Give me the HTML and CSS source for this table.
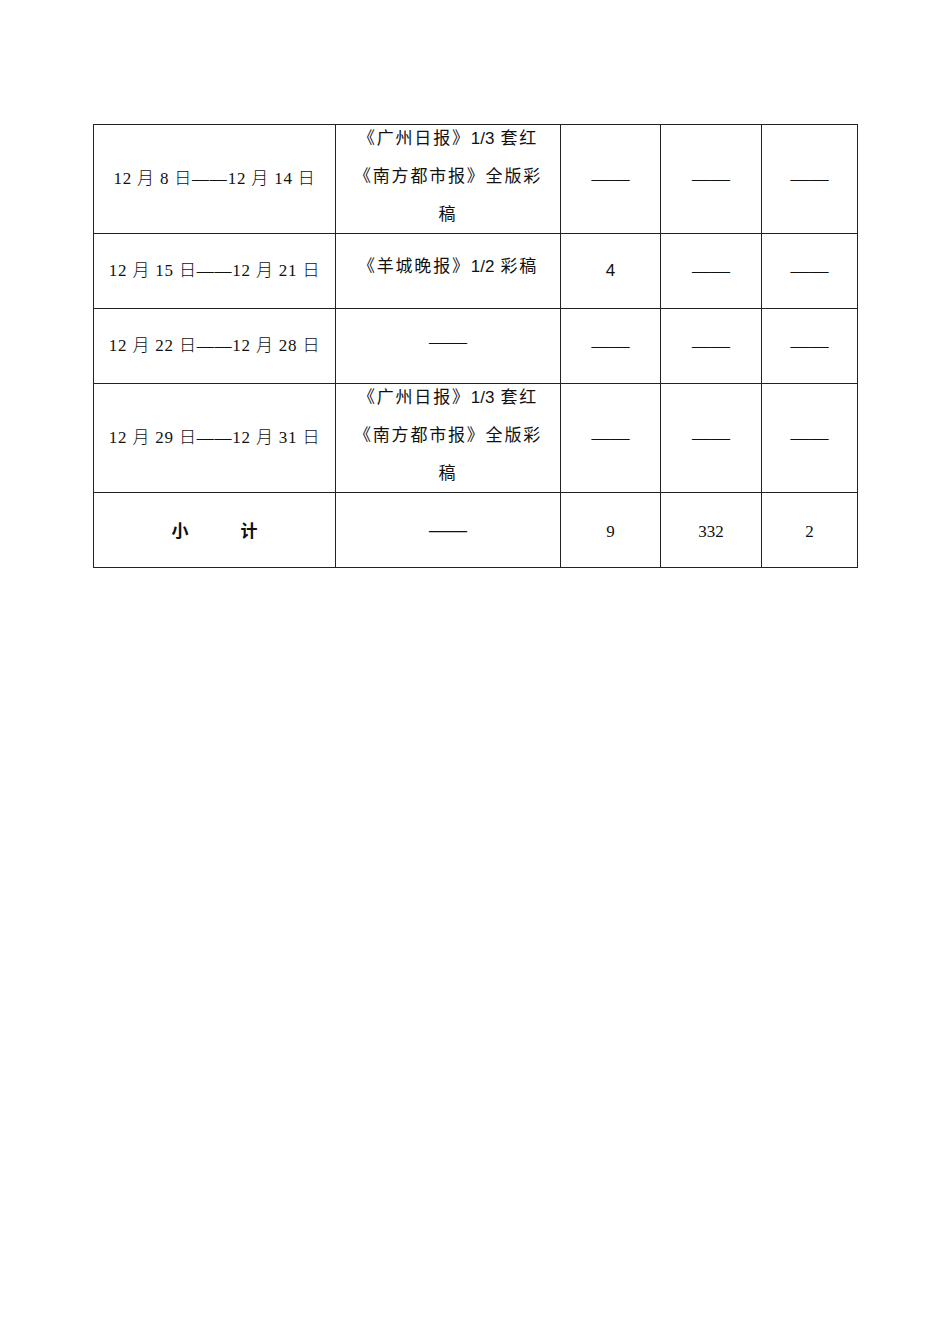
FILE: index.html
```html
<!DOCTYPE html>
<html lang="zh">
<head>
<meta charset="utf-8">
<link rel="stylesheet" href="styles.css">
</head>
<body>
<div class="page">
<table class="sheet">
  <colgroup>
    <col class="c1"><col class="c2"><col class="c3"><col class="c4"><col class="c5">
  </colgroup>
  <tr class="tall">
    <td class="date">12 月 8 日——12 月 14 日</td>
    <td class="media"><div class="lines">《广州日报》<span class="sans">1/3</span> 套红<br>《南方都市报》全版彩<br>稿</div></td>
    <td class="dash">——</td><td class="dash">——</td><td class="dash">——</td>
  </tr>
  <tr class="short">
    <td class="date">12 月 15 日——12 月 21 日</td>
    <td class="media"><div class="up">《羊城晚报》<span class="sans">1/2</span> 彩稿</div></td>
    <td class="num sans">4</td><td class="dash">——</td><td class="dash">——</td>
  </tr>
  <tr class="short">
    <td class="date">12 月 22 日——12 月 28 日</td>
    <td class="dash"><div class="up">——</div></td>
    <td class="dash">——</td><td class="dash">——</td><td class="dash">——</td>
  </tr>
  <tr class="tall">
    <td class="date">12 月 29 日——12 月 31 日</td>
    <td class="media"><div class="lines">《广州日报》<span class="sans">1/3</span> 套红<br>《南方都市报》全版彩<br>稿</div></td>
    <td class="dash">——</td><td class="dash">——</td><td class="dash">——</td>
  </tr>
  <tr class="short">
    <td class="total">小<span class="gap"></span>计</td>
    <td class="dash bold">——</td>
    <td class="num"><div class="down">9</div></td><td class="num"><div class="down">332</div></td><td class="num"><div class="down">2</div></td>
  </tr>
</table>
</div>
</body>
</html>
```
FILE: styles.css
```css
html, body {
  margin: 0;
  padding: 0;
  background: #fff;
}
.page {
  padding: 124px 0 0 93px;
}
.sheet {
  border-collapse: collapse;
  table-layout: fixed;
  width: 764px;
  font-family: "Liberation Serif", "Noto Sans CJK SC", serif;
  font-size: 16px;
  color: #111;
}
.c1 { width: 242px; }
.c2 { width: 225px; }
.c3 { width: 100px; }
.c4 { width: 101px; }
.c5 { width: 96px; }
.sheet td {
  border: 1px solid #222;
  text-align: center;
  vertical-align: middle;
  padding: 0;
  line-height: 20px;
}
.tall td { height: 108px; }
.short td { height: 74px; }
.date {
  font-size: 17px;
  letter-spacing: 0.8px;
  font-weight: 300;
}
.media {
  font-size: 17px;
  letter-spacing: 1.8px;
}
.media .sans {
  letter-spacing: 0;
}
.lines {
  line-height: 38px;
  margin: -6px 0 -2px;
}
.up {
  margin-bottom: 9px;
}
.down {
  margin-top: 4px;
}
.sans {
  font-family: "Liberation Sans", "Noto Sans CJK SC", sans-serif;
}
.dash {
  font-family: "Liberation Serif", serif;
  font-size: 19px;
  letter-spacing: 0;
}
.bold {
  font-weight: bold;
  font-size: 19px;
}
.num {
  font-size: 17px;
}
.total {
  font-weight: bold;
  font-family: "Noto Sans CJK SC", sans-serif;
  font-size: 17px;
}
.gap {
  display: inline-block;
  width: 52px;
}
```
